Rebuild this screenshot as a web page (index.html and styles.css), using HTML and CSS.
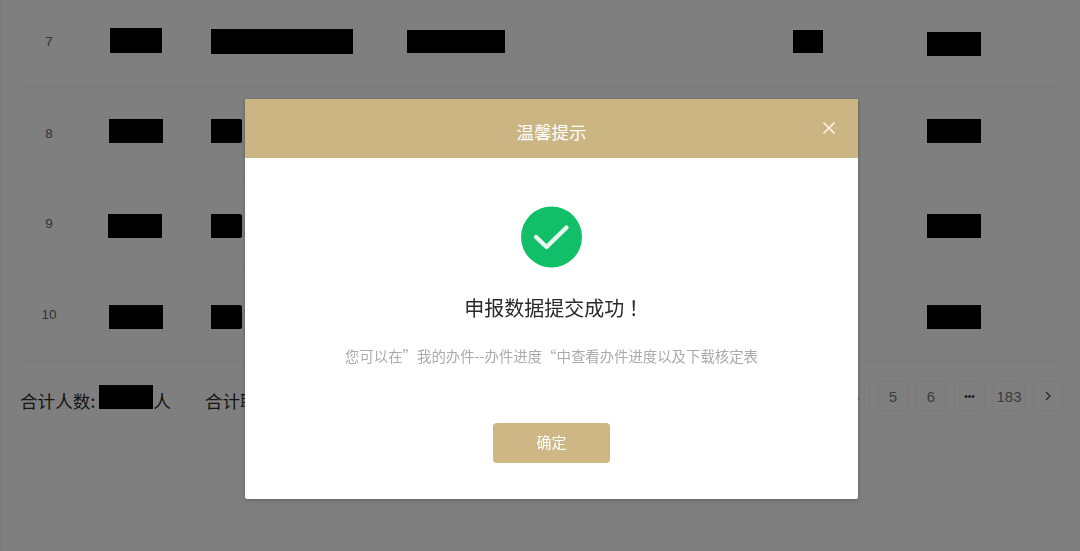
FILE: index.html
```html
<!DOCTYPE html>
<html lang="zh-CN">
<head>
<meta charset="utf-8">
<title>温馨提示</title>
<link rel="stylesheet" href="styles.css">
</head>
<body>
<div class="page">
  <div class="table">
    <div class="row row-7">
      <div class="num">7</div>
      <div class="cell"><span class="bar b1"></span></div>
      <div class="cell"><span class="bar b2-long"></span></div>
      <div class="cell"><span class="bar b3"></span></div>
      <div class="cell"><span class="bar b4"></span></div>
      <div class="cell"><span class="bar b5"></span></div>
    </div>
    <div class="row row-8">
      <div class="num">8</div>
      <div class="cell"><span class="bar b1"></span></div>
      <div class="cell"><span class="bar b2"></span></div>
      <div class="cell"></div>
      <div class="cell"></div>
      <div class="cell"><span class="bar b5"></span></div>
    </div>
    <div class="row row-9">
      <div class="num">9</div>
      <div class="cell"><span class="bar b1"></span></div>
      <div class="cell"><span class="bar b2"></span></div>
      <div class="cell"></div>
      <div class="cell"></div>
      <div class="cell"><span class="bar b5"></span></div>
    </div>
    <div class="row row-10">
      <div class="num">10</div>
      <div class="cell"><span class="bar b1"></span></div>
      <div class="cell"><span class="bar b2"></span></div>
      <div class="cell"></div>
      <div class="cell"></div>
      <div class="cell"><span class="bar b5"></span></div>
    </div>
  </div>
  <div class="footer">
    <div class="totals">
      <span>合计人数:</span><span class="bar total-bar"></span><span>人</span>
      <span class="total-next">合计职工</span>
    </div>
    <div class="pager">
      <span class="pg">4</span>
      <span class="pg">5</span>
      <span class="pg">6</span>
      <span class="pg pg-more">•••</span>
      <span class="pg pg-wide">183</span>
      <span class="pg">
        <svg class="chev" viewBox="0 0 8 12" width="8" height="12"><path d="M2 2l4 4-4 4" fill="none" stroke="currentColor" stroke-width="1.3"/></svg>
      </span>
    </div>
  </div>
</div>

<div class="overlay">
  <div class="modal">
    <div class="modal-head">
      <span class="modal-title">温馨提示</span>
      <svg class="close" viewBox="0 0 14 14" width="14" height="14"><path d="M1.5 1.5l11 11M12.5 1.5l-11 11" fill="none" stroke="currentColor" stroke-width="1.5"/></svg>
    </div>
    <div class="modal-body">
      <svg class="ok" viewBox="0 0 62 62" width="62" height="62">
        <circle cx="30.500" cy="31" r="30.500" fill="#10bf67"/>
        <path d="M15 31l10.500 10L45.500 21.500" fill="none" stroke="#e9f8ef" stroke-width="4.400" stroke-linecap="round" stroke-linejoin="round"/>
      </svg>
      <div class="msg">申报数据提交成功&nbsp;！</div>
      <div class="sub">您可以在”我的办件--办件进度“中查看办件进度以及下载核定表</div>
      <button class="confirm">确定</button>
    </div>
  </div>
</div>
</body>
</html>
```
FILE: styles.css
```css
* { box-sizing: border-box; }
html, body { margin: 0; height: 100%; overflow: hidden; }
body {
  background: #fff;
  font-family: "Noto Sans CJK SC", "Liberation Sans", sans-serif;
  color: #222;
  text-spacing-trim: space-all;
}
.page { height: 551px; border-left: 2px solid #f4f4f4; padding-left: 18px; }
.table { width: 1040px; }
.row {
  display: grid;
  grid-template-columns: 58px 133px 196px 386px 134px 133px;
  align-items: start;
  border-bottom: 1px solid #f5f5f5;
}
.row-7 { height: 88px; }
.row-8 { height: 91px; }
.row-9 { height: 91px; }
.row-10 { height: 91px; }
.num {
  align-self: stretch;
  border-right: 1px solid #f5f5f5;
  text-align: center;
  font: 13.500px/20px "Liberation Sans", sans-serif;
  color: #666;
  padding-left: 1px;
}
.row-7 .num { padding-top: 32px; }
.row-8 .num { padding-top: 36px; }
.row-9 .num { padding-top: 35px; }
.row-10 .num { padding-top: 35px; }
.bar { display: block; background: #000; }
.b1 { width: 54px; height: 24px; margin-left: 31px; }
.b2-long { width: 142px; height: 25px; }
.b2 { width: 31px; height: 24px; border-radius: 0 2px 2px 0; }
.b3 { width: 98px; height: 23px; margin-top: 2px; }
.b4 { width: 30px; height: 23px; margin-top: 2px; }
.b5 { width: 54px; height: 24px; }
.row-7 .cell { padding-top: 28px; }
.row-7 .b5 { margin-top: 4px; }
.row-7 .b2-long { margin-top: 1px; }
.row-7 .b1 { margin-left: 32px; height: 25px; width: 52px; }
.row-8 .cell { padding-top: 31px; }
.row-9 .cell { padding-top: 35px; }
.row-10 .cell { padding-top: 35px; }
.row-9 .b1 { margin-left: 30px; }
.footer { display: flex; align-items: flex-start; padding-top: 20px; width: 1043px; }
.totals { display: flex; align-items: flex-start; font-size: 17.600px; line-height: 40px; height: 42px; color: #2b2b2b; }
.total-bar { width: 54px; height: 24px; margin: 4px 0 0 4px; }
.total-next { margin-left: 34px; }
.pager { display: flex; gap: 8px; margin-left: auto; }
.pg {
  display: flex;
  align-items: center;
  justify-content: center;
  width: 30px;
  height: 30px;
  border: 1px solid #f3f3f3;
  border-radius: 4px;
  font: 15px "Liberation Sans", sans-serif;
  color: #777;
}
.pg-more { width: 31px; font-size: 10px; color: #333; }
.pg-wide { width: 32px; }
.chev { color: #555; }

.overlay { position: fixed; inset: 0; background: rgba(0, 0, 0, .5); }
.modal {
  position: absolute;
  left: 245px;
  top: 99px;
  width: 613px;
  height: 400px;
  background: #fff;
  border-radius: 2px;
  box-shadow: 0 1px 4px rgba(0, 0, 0, .25);
  overflow: hidden;
}
.modal-head {
  display: flex;
  align-items: center;
  justify-content: center;
  height: 59px;
  background: #cbb583;
  color: #fff;
  position: relative;
}
.modal-title { font-size: 17.500px; line-height: 66px; height: 59px; }
.close { position: absolute; right: 22px; top: 22px; color: #fff7e8; }
.modal-body {
  display: flex;
  flex-direction: column;
  align-items: center;
  padding-top: 48px;
}
.ok { display: block; }
.msg { font-size: 20px; line-height: 30px; margin-top: 25px; padding-left: 10px; color: #2a2a2a; }
.sub { font-size: 14.400px; line-height: 22px; margin-top: 22px; color: #aaa; }
.confirm {
  width: 117px;
  height: 40px;
  margin-top: 56px;
  padding: 0 0 4px;
  border: 0;
  border-radius: 4px;
  background: #cfb785;
  color: #fff;
  font: 15px "Noto Sans CJK SC", sans-serif;
}
```
